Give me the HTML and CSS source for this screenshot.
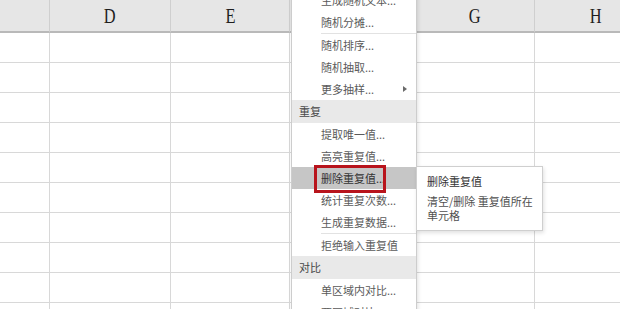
FILE: index.html
```html
<!DOCTYPE html>
<html lang="zh-CN">
<head>
    <meta charset="UTF-8">
    <title>删除重复值</title>
    <link rel="stylesheet" href="styles.css">
</head>
<body>
    <div class="sheet">
        <div class="grid">
            <div class="col-head"></div>
            <div class="col-head"><span class="letter">D</span></div>
            <div class="col-head"><span class="letter">E</span></div>
            <div class="col-head"><span class="letter">F</span></div>
            <div class="col-head"><span class="letter">G</span></div>
            <div class="col-head"><span class="letter">H</span></div>
        </div>
        <div class="grid rows" id="rows"></div>

        <!-- context menu -->
        <div class="menu">
            <div class="menu-item">生成随机文本...</div>
            <div class="menu-item">随机分摊...</div>
            <div class="menu-sep"></div>
            <div class="menu-item">随机排序...</div>
            <div class="menu-item">随机抽取...</div>
            <div class="menu-item has-sub">更多抽样...<span class="sub-arrow"></span></div>
            <div class="menu-section">重复</div>
            <div class="menu-item">提取唯一值...</div>
            <div class="menu-item">高亮重复值...</div>
            <div class="menu-item active">删除重复值...<span class="mark"></span></div>
            <div class="menu-item">统计重复次数...</div>
            <div class="menu-item">生成重复数据...</div>
            <div class="menu-sep"></div>
            <div class="menu-item">拒绝输入重复值</div>
            <div class="menu-section">对比</div>
            <div class="menu-item">单区域内对比...</div>
            <div class="menu-item">两区域对比...</div>
        </div>

        <div class="tip">
            <div class="tip-title">删除重复值</div>
            <div class="tip-text">清空/删除 重复值所在<br>单元格</div>
        </div>
    </div>

    <script>
        const rows = document.getElementById('rows');
        for (let r = 0; r < 10; r++) {
            for (let c = 0; c < 6; c++) {
                const cell = document.createElement('div');
                cell.className = 'cell';
                rows.appendChild(cell);
            }
        }
    </script>
</body>
</html>
```

FILE: styles.css
```css
:root {
    --grid-line: #d8d8d8;
    --menu-text: #5a5a5a;
    --ui-font: "Noto Sans CJK SC", "Noto Sans", sans-serif;
}

body {
    margin: 0;
    background: #fff;
    overflow: hidden;
    font-family: var(--ui-font);
}

.sheet {
    position: relative;
    width: 620px;
    height: 309px;
    overflow: hidden;
}

.grid {
    display: grid;
    grid-template-columns: 50px 121px 119px 126px 119px 122px;
}

.col-head {
    height: 31px;
    background: #e6e6e6;
    border-right: 1px solid #cfcfcf;
    border-bottom: 2px solid #b9b9b9;
    display: flex;
    align-items: center;
    justify-content: center;
}

.letter {
    display: inline-block;
    font-family: "Liberation Serif", serif;
    font-size: 21px;
    color: #1e1e1e;
    transform: scaleX(0.78);
    margin-top: 2px;
}

.cell {
    height: 29px;
    border-right: 1px solid var(--grid-line);
    border-bottom: 1px solid var(--grid-line);
}

/* Menu */
.menu {
    position: absolute;
    left: 291px;
    top: -12px;
    width: 124px;
    background: #fff;
    border: 1px solid #cdcdcd;
    box-shadow: 1px 2px 4px rgba(0, 0, 0, 0.12);
    font-size: 11px;
    color: var(--menu-text);
}

.menu-item {
    position: relative;
    height: 22px;
    line-height: 22px;
    padding-left: 29px;
    white-space: nowrap;
}

.menu-item.active {
    background: #c6c6c6;
    color: #333;
}

.menu-sep {
    height: 1px;
    margin-left: 29px;
    background: #e2e2e2;
}

.menu-section {
    height: 23px;
    line-height: 23px;
    padding-left: 7px;
    background: #e9e9e9;
    color: #474747;
}

.sub-arrow {
    position: absolute;
    right: 9px;
    top: 8px;
    width: 0;
    height: 0;
    border-top: 3.5px solid transparent;
    border-bottom: 3.5px solid transparent;
    border-left: 4px solid #6a6a6a;
}

.mark {
    position: absolute;
    left: 22px;
    top: -2px;
    width: 66px;
    height: 22px;
    border: 3px solid #b8141c;
}

/* Tooltip */
.tip {
    position: absolute;
    left: 416px;
    top: 166px;
    width: 105px;
    padding: 7px 10px 8px;
    background: #fff;
    border: 1px solid #cfcfcf;
    box-shadow: 1px 2px 4px rgba(0, 0, 0, 0.12);
    font-size: 11px;
}

.tip-title {
    line-height: 14px;
    color: #333;
}

.tip-text {
    margin-top: 6px;
    line-height: 14px;
    color: #505050;
    white-space: nowrap;
}
```
